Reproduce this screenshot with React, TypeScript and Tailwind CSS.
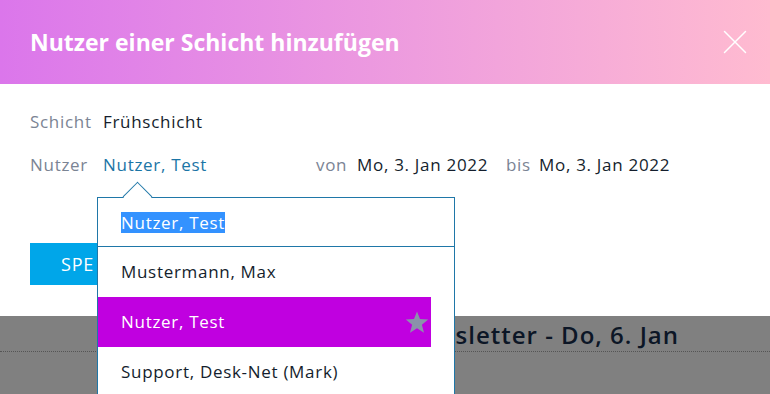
import { X } from "lucide-react";

const font = { fontFamily: '"Open Sans", "Noto Sans", sans-serif' };

function Field({ label, children }: { label: string; children: React.ReactNode }) {
  return (
    <div className="flex items-center">
      <span className="w-[73px] text-[#7b8494]">{label}</span>
      {children}
    </div>
  );
}

function Star() {
  return (
    <svg width="24" height="24" viewBox="0 0 24 24" className="fill-[#8a92aa]">
      <path d="M12 1.5l3 7.6 8.2.5-6.3 5.2 2.1 8-7-4.5-7 4.5 2.1-8L.8 9.6 9 9.1z" />
    </svg>
  );
}

function UserDropdown() {
  const items = ["Mustermann, Max", "Nutzer, Test", "Support, Desk-Net (Mark)"];
  return (
    <div className="absolute left-[97px] top-[197px] w-[358px] border border-[#1f77a8] bg-white text-[17px] tracking-[0.7px] text-[#141e2d]">
      {/* caret */}
      <div className="absolute -top-[12px] left-[29px] h-[21px] w-[21px] rotate-45 border-l border-t border-[#1f77a8] bg-white" />
      <div className="relative flex h-[49px] items-center border-b border-[#1f77a8] px-[23px]">
        <span className="bg-[#3392ff] leading-[21px] text-white">Nutzer, Test</span>
      </div>
      <ul className="pr-[23px]">
        {items.map((name, i) => (
          <li
            key={name}
            className={
              i === 1
                ? "flex h-[50px] items-center justify-between bg-[#c000e0] pl-[23px] pr-[2px] text-white"
                : "flex h-[50px] items-center pl-[23px]"
            }
          >
            {name}
            {i === 1 && <Star />}
          </li>
        ))}
      </ul>
    </div>
  );
}

export default function App() {
  return (
    <div style={font} className="relative h-[394px] w-[770px] overflow-hidden bg-[#808080]">
      <header className="flex h-[84px] items-center justify-between bg-gradient-to-r from-[#db76eb] to-[#ffbbd0] pl-[30px] pr-[14px]">
        <h1 className="text-[23px] font-bold text-white">Nutzer einer Schicht hinzufügen</h1>
        <X size={42} strokeWidth={0.85} className="text-white" />
      </header>

      <section className="flex h-[232px] flex-col bg-white px-[30px] pt-[25px] text-[17px] tracking-[0.7px] text-[#141e2d]">
        <div className="flex flex-col gap-[17px]">
          <Field label="Schicht">Frühschicht</Field>
          <div className="flex items-center">
            <Field label="Nutzer">
              <span className="w-[213px] text-[#1b75a6]">Nutzer, Test</span>
            </Field>
            <span className="w-[41px] text-[#7b8494]">von</span>
            <span className="w-[149px]">Mo, 3. Jan 2022</span>
            <span className="w-[33px] text-[#7b8494]">bis</span>
            <span>Mo, 3. Jan 2022</span>
          </div>
        </div>
        <button className="mt-[66px] h-[42px] w-[72px] overflow-hidden whitespace-nowrap bg-[#00a6e9] pl-[31px] text-left text-[18px] tracking-[0.8px] text-white">
          SPE
        </button>
      </section>

      <div className="flex justify-end border-b border-dotted border-[#555] pr-[91px] pt-[2px]">
        <span className="text-[24px] font-semibold leading-[33px] tracking-[1px] text-[#0c1626]">
          Newsletter - Do, 6. Jan
        </span>
      </div>

      <UserDropdown />
    </div>
  );
}
